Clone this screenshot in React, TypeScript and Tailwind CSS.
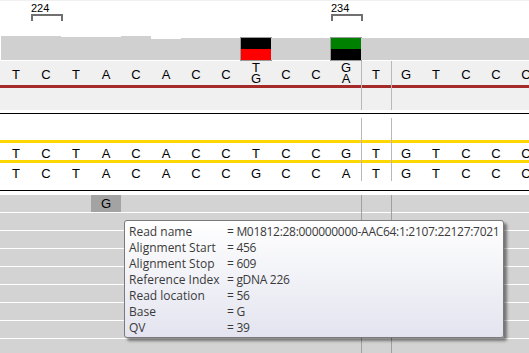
import React from 'react'

const ref = ['T', 'C', 'T', 'A', 'C', 'A', 'C', 'C', 'T/G', 'C', 'C', 'G/A', 'T', 'G', 'T', 'C', 'C', 'C']
const readA = ['T', 'C', 'T', 'A', 'C', 'A', 'C', 'C', 'T', 'C', 'C', 'G', 'T', 'G', 'T', 'C', 'C', 'C']
const readB = ['T', 'C', 'T', 'A', 'C', 'A', 'C', 'C', 'G', 'C', 'C', 'A', 'T', 'G', 'T', 'C', 'C', 'C']
const coverage = [24, 24, 23, 23, 24, 21, 22, 22, 22, 22, 22, 23, 22, 22, 22, 22, 22, 22]

const info: [string, string][] = [
  ['Read name', '= M01812:28:000000000-AAC64:1:2107:22127:7021'],
  ['Alignment Start', '= 456'],
  ['Alignment Stop', '= 609'],
  ['Reference Index', '= gDNA 226'],
  ['Read location', '= 56'],
  ['Base', '= G'],
  ['QV', '= 39'],
]

const mono = { fontFamily: '"Liberation Sans", Arial, sans-serif' }

function Marks({ color }: { color: string }) {
  return (
    <>
      <div className={`absolute top-0 bottom-0 left-[361px] w-px ${color}`} />
      <div className={`absolute top-0 bottom-0 left-[391px] w-px ${color}`} />
    </>
  )
}

function BaseRow({ bases, h }: { bases: string[]; h: string }) {
  return (
    <div className={`flex pl-px ${h}`}>
      {bases.map((b, i) => (
        <div key={i} className="w-[30px] shrink-0 flex items-end justify-center text-[13px] leading-[13px] text-black">
          {b}
        </div>
      ))}
    </div>
  )
}

function Bracket({ label }: { label: string }) {
  return (
    <div className="w-[30px] shrink-0 pt-[2px]">
      <div className="text-[11px] leading-[10px] text-black">{label}</div>
      <div className="mt-[1px] h-[7px] w-[32px] border-2 border-b-0 border-[#707070]" />
    </div>
  )
}

export default function App() {
  return (
    <div className="relative w-[529px] h-[353px] overflow-hidden bg-white" style={mono}>
      {/* ruler */}
      <div className="h-px bg-[#f0f0f0]" />
      <div className="flex pl-px h-[35px]">
        {ref.map((_, i) =>
          i === 1 ? <Bracket key={i} label="224" /> : i === 11 ? <Bracket key={i} label="234" /> : <div key={i} className="w-[30px] shrink-0" />
        )}
      </div>

      {/* coverage */}
      <div className="flex pl-px h-[24px] items-end bg-white">
        {coverage.map((c, i) => {
          if (i === 8)
            return (
              <div key={i} className="w-[30px] shrink-0 h-[22px] flex flex-col outline outline-1 outline-[#9a9a9a]">
                <div className="h-[11px] bg-black" />
                <div className="flex-1 bg-[#ff0000]" />
              </div>
            )
          if (i === 11)
            return (
              <div key={i} className="w-[30px] shrink-0 h-[22px] flex flex-col outline outline-1 outline-[#9a9a9a]">
                <div className="h-[11px] bg-[#008000]" />
                <div className="flex-1 bg-black" />
              </div>
            )
          return <div key={i} className="w-[30px] shrink-0 bg-[#d0d0d0]" style={{ height: c }} />
        })}
      </div>
      <div className="h-px bg-white" />

      {/* reference track */}
      <div className="relative bg-[#f0f0f0] h-[49px]">
        <div className="flex pl-px h-[24px]">
          {ref.map((b, i) => (
            <div key={i} className="w-[30px] shrink-0 flex flex-col items-center justify-center text-[13px] text-black">
              {b.includes('/') ? (
                <>
                  <span className="leading-[10px] mt-[1px]">{b[0]}</span>
                  <span className="leading-[11px]">{b[2]}</span>
                </>
              ) : (
                <span className="leading-[13px] mt-[3px]">{b}</span>
              )}
            </div>
          ))}
        </div>
        <div className="h-[3px] bg-[#a52a2a]" />
        <Marks color="bg-[#b8b8b8]" />
      </div>
      <div className="h-[3px]" />
      <div className="h-px bg-black" />

      {/* consensus panel */}
      <div className="relative">
        <div className="h-[26px]" />
        <div className="h-[3px] bg-[#ffd700]" />
        <BaseRow bases={readA} h="h-[17px]" />
        <div className="h-[3px] bg-[#ffd700]" />
        <BaseRow bases={readB} h="h-[17px]" />
        <div className="h-[10px]" />
        <div className="absolute top-[4px] h-[63px] left-0 right-0">
          <Marks color="bg-[#b8b8b8]" />
        </div>
      </div>
      <div className="h-px bg-black" />
      <div className="h-[4px]" />

      {/* reads */}
      <div className="relative">
        {Array.from({ length: 9 }).map((_, r) => (
          <div key={r} className="h-[18px] bg-[#d3d3d3] border-b border-white flex pl-px">
            {r === 0 && (
              <div className="ml-[90px] w-[30px] h-[17px] bg-[#a3a3a3] flex items-center justify-center text-[13px] text-black">G</div>
            )}
          </div>
        ))}
        <Marks color="bg-[#a0a0a0]" />

        <div
          className="absolute left-[124px] top-[25px] w-[380px] h-[118px] rounded-[3px] border border-[#7a7a7a] bg-gradient-to-b from-white to-[#e3e4ef] shadow-[3px_3px_3px_rgba(0,0,0,0.45)] pl-[4px] pt-[3px] text-[12px] leading-[16px] text-[#3a3a3a]"
          style={{ fontFamily: '"Open Sans", "Noto Sans", sans-serif' }}
        >
          {info.map(([k, v]) => (
            <div key={k} className="flex whitespace-nowrap">
              <div className="w-[98px] shrink-0">{k}</div>
              <div className="tracking-[-0.3px]">{v}</div>
            </div>
          ))}
        </div>
      </div>
    </div>
  )
}
